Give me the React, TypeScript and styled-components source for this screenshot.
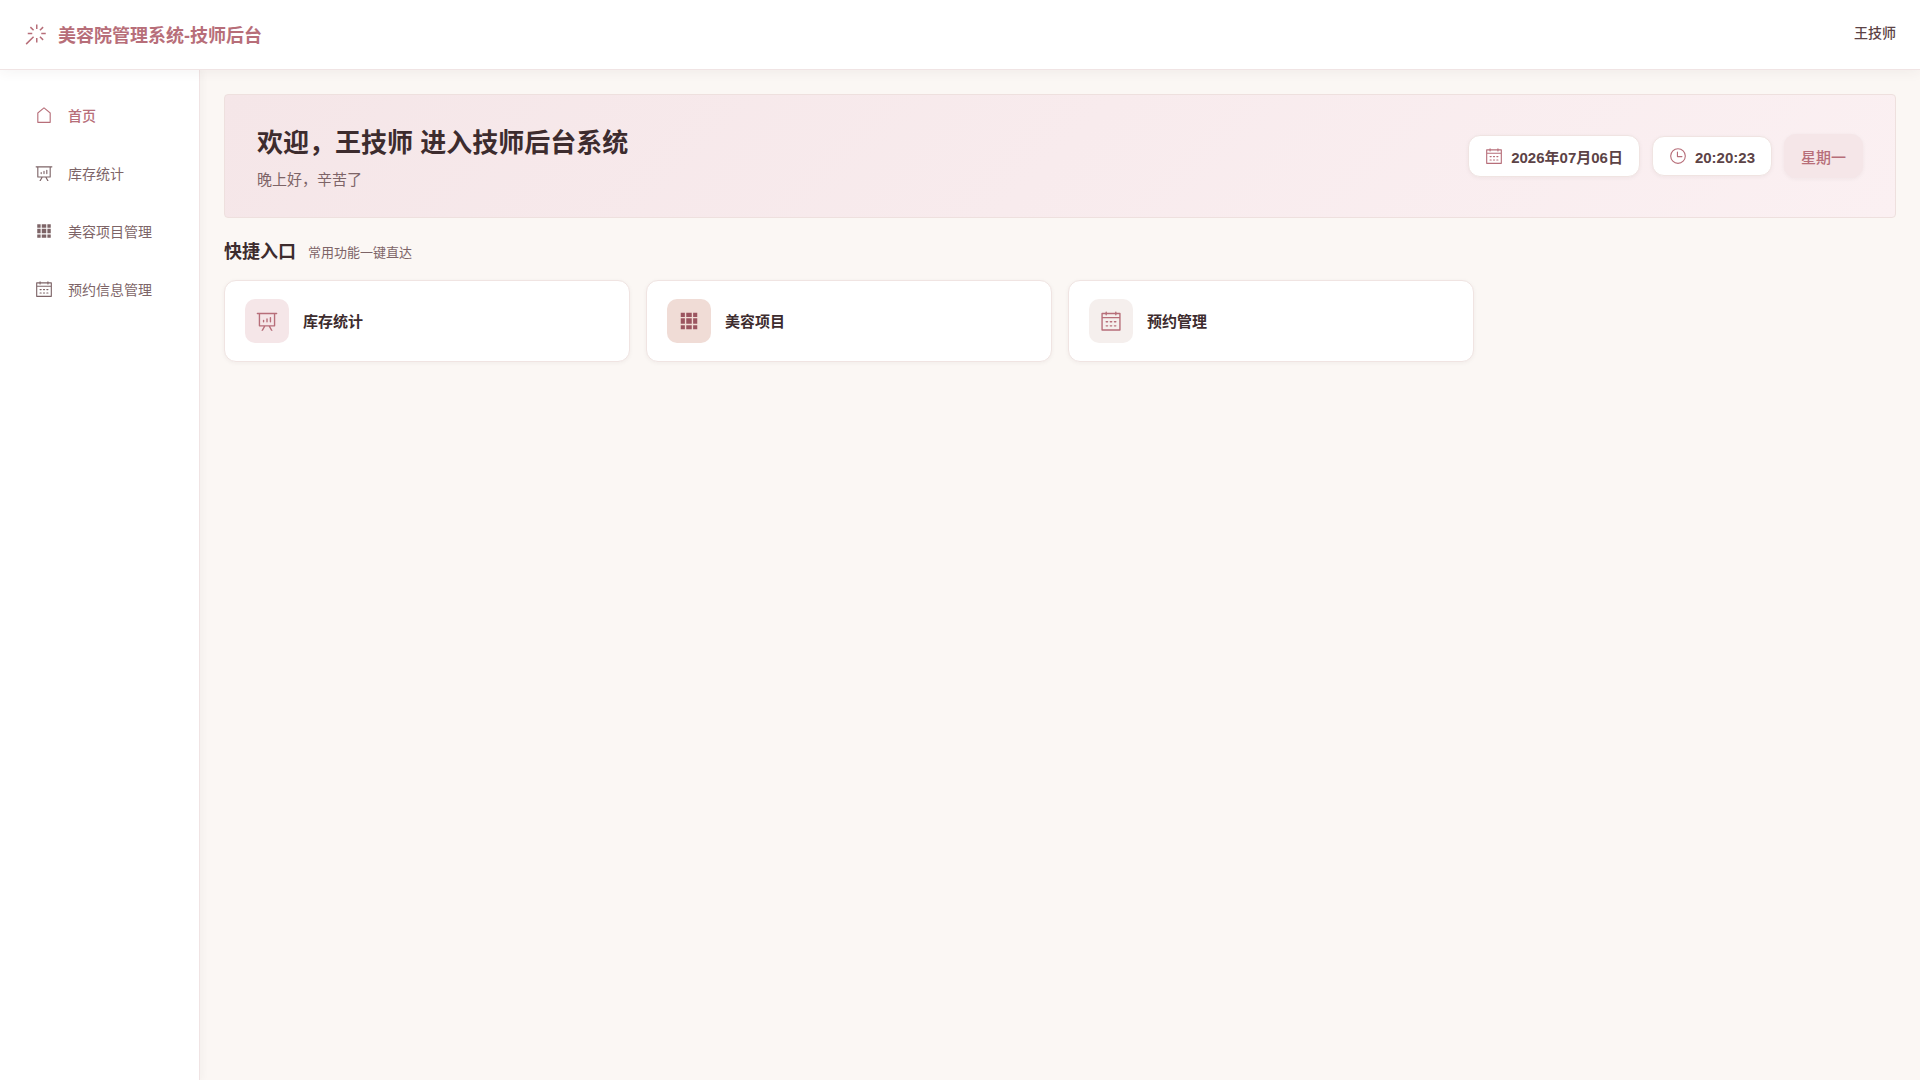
import React from 'react';
import styled, { createGlobalStyle } from 'styled-components';

const GlobalStyle = createGlobalStyle`
  *, *::before, *::after { box-sizing: border-box; }
  body {
    margin: 0;
    background: #fbf7f4;
    color: #3d2c2e;
    font-family: "Liberation Sans", "Noto Sans CJK SC", sans-serif;
    font-size: 14px;
  }
  h1, h2, p { margin: 0; }
`;

const iconPaths = {
  magic:
    'M512 64h64v192h-64V64zm0 576h64v192h-64V640zM160 480v-64h192v64H160zm576 0v-64h192v64H736zM249.856 199.04l45.248-45.184L430.848 289.6 385.6 334.848 249.856 199.104zM657.152 606.4l45.248-45.248 135.744 135.744-45.248 45.248L657.152 606.4zM114.048 923.2 68.8 877.952l316.8-316.8 45.248 45.248-316.8 316.8zM702.4 334.848 657.152 289.6l135.744-135.744 45.248 45.248L702.4 334.848z',
  house:
    'M192 413.952V896h640V413.952L512 147.328 192 413.952zM139.52 374.4l352-293.312a32 32 0 0 1 40.96 0l352 293.312A32 32 0 0 1 896 398.976V928a32 32 0 0 1-32 32H160a32 32 0 0 1-32-32V398.976a32 32 0 0 1 11.52-24.576z',
  analysis:
    'm665.216 768 110.848 192h-73.856L591.36 768H433.024L322.176 960H248.32l110.848-192H160a32 32 0 0 1-32-32V192H64a32 32 0 0 1 0-64h896a32 32 0 1 1 0 64h-64v544a32 32 0 0 1-32 32H665.216zM832 192H192v512h640V192zM352 448a32 32 0 0 1 32 32v64a32 32 0 0 1-64 0v-64a32 32 0 0 1 32-32zm160-64a32 32 0 0 1 32 32v128a32 32 0 0 1-64 0V416a32 32 0 0 1 32-32zm160-64a32 32 0 0 1 32 32v192a32 32 0 1 1-64 0V352a32 32 0 0 1 32-32z',
  grid:
    'M640 384v256H384V384h256zm64 0h192v256H704V384zm-64 512H384V704h256v192zm64 0V704h192v192H704zm-64-768v192H384V128h256zm64 0h192v192H704V128zM320 384v256H128V384h192zm0 512H128V704h192v192zm0-768v192H128V128h192z',
  calendar:
    'M128 384v512h768V192H768v32a32 32 0 1 1-64 0v-32H320v32a32 32 0 0 1-64 0v-32H128v128h768v64H128zm192-256h384V96a32 32 0 1 1 64 0v32h160a32 32 0 0 1 32 32v768a32 32 0 0 1-32 32H96a32 32 0 0 1-32-32V160a32 32 0 0 1 32-32h160V96a32 32 0 0 1 64 0v32zm-32 384h64a32 32 0 0 1 0 64h-64a32 32 0 0 1 0-64zm0 192h64a32 32 0 1 1 0 64h-64a32 32 0 1 1 0-64zm192-192h64a32 32 0 0 1 0 64h-64a32 32 0 0 1 0-64zm0 192h64a32 32 0 1 1 0 64h-64a32 32 0 1 1 0-64zm192-192h64a32 32 0 1 1 0 64h-64a32 32 0 1 1 0-64zm0 192h64a32 32 0 1 1 0 64h-64a32 32 0 1 1 0-64z',
  clock:
    'M512 896a384 384 0 1 0 0-768 384 384 0 0 0 0 768zm0 64a448 448 0 1 1 0-896 448 448 0 0 1 0 896zM480 256a32 32 0 0 1 32 32v256a32 32 0 0 1-64 0V288a32 32 0 0 1 32-32zM480 512h256q32 0 32 32t-32 32H480q-32 0-32-32t32-32z',
};

type IconName = keyof typeof iconPaths;

const Svg = styled.svg<{ $size: number }>`
  display: block;
  flex: none;
  width: ${(p) => p.$size}px;
  height: ${(p) => p.$size}px;
  fill: currentColor;
`;

const Icon = ({ name, size }: { name: IconName; size: number }) => (
  <Svg $size={size} viewBox="0 0 1024 1024" aria-hidden="true">
    <path d={iconPaths[name]} />
  </Svg>
);

const Page = styled.div`
  display: flex;
  flex-direction: column;
  min-height: 100vh;
`;

const Header = styled.header`
  position: relative;
  z-index: 1;
  display: flex;
  align-items: center;
  justify-content: space-between;
  height: 70px;
  padding: 0 24px;
  background: #fff;
  border-bottom: 1px solid #f0e4e4;
  box-shadow: 0 2px 12px rgba(61, 44, 46, 0.06);
`;

const Brand = styled.div`
  display: flex;
  align-items: center;
  gap: 10px;
  color: #b76e79;
`;

const BrandName = styled.span`
  padding-top: 2px;
  font-size: 18px;
  line-height: 26px;
  font-weight: 700;
`;

const UserButton = styled.button`
  padding: 0 0 4px;
  border: 0;
  background: none;
  color: #5c4346;
  font: inherit;
  font-weight: 500;
  line-height: 20px;
  cursor: pointer;
`;

const Body = styled.div`
  display: flex;
  flex: 1;
`;

const Sidebar = styled.nav`
  flex: none;
  width: 200px;
  padding: 20px 12px;
  background: #fff;
  border-right: 1px solid #f0e4e4;
  box-shadow: 2px 0 8px rgba(61, 44, 46, 0.04);
`;

const Menu = styled.ul`
  display: flex;
  flex-direction: column;
  gap: 8px;
  margin: 0;
  padding: 0;
  list-style: none;
`;

const MenuLink = styled.a<{ $active?: boolean }>`
  display: flex;
  align-items: center;
  gap: 15px;
  height: 50px;
  padding: 0 23px;
  color: ${(p) => (p.$active ? '#b76e79' : '#7d6467')};
  font-weight: ${(p) => (p.$active ? 500 : 400)};
  text-decoration: none;
  white-space: nowrap;
`;

const Main = styled.main`
  flex: 1;
  min-width: 0;
  padding: 24px;
`;

const Banner = styled.section`
  display: flex;
  align-items: center;
  justify-content: space-between;
  padding: 26px 32px;
  border: 1px solid #eee0de;
  border-radius: 4px;
  background: linear-gradient(135deg, #f5e6e8 0%, #fbf0f2 100%);
`;

const Greeting = styled.div`
  display: flex;
  flex-direction: column;
  gap: 8px;
  padding-top: 4px;
`;

const GreetingTitle = styled.h1`
  font-size: 26px;
  line-height: 36px;
  font-weight: 700;
`;

const GreetingText = styled.p`
  color: #7d6467;
  font-size: 15px;
  line-height: 22px;
`;

const Pills = styled.div`
  display: flex;
  align-items: center;
  gap: 12px;
`;

const Pill = styled.div<{ $line: number; $tinted?: boolean }>`
  display: flex;
  align-items: center;
  gap: 8px;
  padding: 10px 16px;
  border: 1px solid ${(p) => (p.$tinted ? '#f5e6e8' : '#f0e4e2')};
  border-radius: 12px;
  background: ${(p) => (p.$tinted ? '#f5e6e8' : '#fff')};
  box-shadow: 0 1px 4px rgba(61, 44, 46, 0.05);
  color: ${(p) => (p.$tinted ? '#b76e79' : '#5c4346')};
  font-size: 15px;
  line-height: ${(p) => p.$line}px;
  font-weight: ${(p) => (p.$tinted ? 500 : 700)};

  svg {
    margin: -2px 0;
    color: #b76e79;
  }

  time,
  span {
    padding-top: 2px;
    margin-bottom: -2px;
  }
`;

const SectionHead = styled.div`
  display: flex;
  align-items: center;
  gap: 12px;
  padding: 20px 0 14px;
`;

const SectionTitle = styled.h2`
  font-size: 18px;
  line-height: 28px;
  font-weight: 700;
`;

const SectionHint = styled.span`
  padding-top: 2px;
  color: #7d6467;
  font-size: 13px;
  line-height: 20px;
`;

const Cards = styled.div`
  display: grid;
  grid-template-columns: repeat(4, 1fr);
  gap: 16px;
`;

const Card = styled.button`
  display: flex;
  align-items: center;
  gap: 14px;
  padding: 18px 20px;
  border: 1px solid #f0e4e2;
  border-radius: 12px;
  background: #fff;
  box-shadow: 0 1px 4px rgba(61, 44, 46, 0.05);
  color: #3d2c2e;
  font: inherit;
  font-size: 15px;
  line-height: 22px;
  font-weight: 700;
  cursor: pointer;
`;

const CardLabel = styled.span`
  padding-top: 2px;
`;

const CardIcon = styled.span<{ $bg: string; $color: string }>`
  display: grid;
  place-items: center;
  width: 44px;
  height: 44px;
  border-radius: 10px;
  background: ${(p) => p.$bg};
  color: ${(p) => p.$color};
`;

const menu: { icon: IconName; label: string }[] = [
  { icon: 'house', label: '首页' },
  { icon: 'analysis', label: '库存统计' },
  { icon: 'grid', label: '美容项目管理' },
  { icon: 'calendar', label: '预约信息管理' },
];

const shortcuts: { icon: IconName; label: string; bg: string; color: string }[] = [
  { icon: 'analysis', label: '库存统计', bg: '#f5e6e8', color: '#b76e79' },
  { icon: 'grid', label: '美容项目', bg: '#f0dcd6', color: '#9b5560' },
  { icon: 'calendar', label: '预约管理', bg: '#f5efed', color: '#b76e79' },
];

export default function App() {
  return (
    <Page>
      <GlobalStyle />
      <Header>
        <Brand>
          <Icon name="magic" size={24} />
          <BrandName>美容院管理系统-技师后台</BrandName>
        </Brand>
        <UserButton type="button">王技师</UserButton>
      </Header>
      <Body>
        <Sidebar>
          <Menu>
            {menu.map((item, i) => (
              <li key={item.label}>
                <MenuLink href="#" $active={i === 0} aria-current={i === 0 ? 'page' : undefined}>
                  <Icon name={item.icon} size={18} />
                  {item.label}
                </MenuLink>
              </li>
            ))}
          </Menu>
        </Sidebar>
        <Main>
          <Banner>
            <Greeting>
              <GreetingTitle>欢迎，王技师 进入技师后台系统</GreetingTitle>
              <GreetingText>晚上好，辛苦了</GreetingText>
            </Greeting>
            <Pills>
              <Pill $line={20}>
                <Icon name="calendar" size={18} />
                <time dateTime="2026-07-06">2026年07月06日</time>
              </Pill>
              <Pill $line={18}>
                <Icon name="clock" size={18} />
                <time>20:20:23</time>
              </Pill>
              <Pill $line={22} $tinted>
                <span>星期一</span>
              </Pill>
            </Pills>
          </Banner>
          <SectionHead>
            <SectionTitle>快捷入口</SectionTitle>
            <SectionHint>常用功能一键直达</SectionHint>
          </SectionHead>
          <Cards>
            {shortcuts.map((s) => (
              <Card type="button" key={s.label}>
                <CardIcon $bg={s.bg} $color={s.color}>
                  <Icon name={s.icon} size={22} />
                </CardIcon>
                <CardLabel>{s.label}</CardLabel>
              </Card>
            ))}
          </Cards>
        </Main>
      </Body>
    </Page>
  );
}
